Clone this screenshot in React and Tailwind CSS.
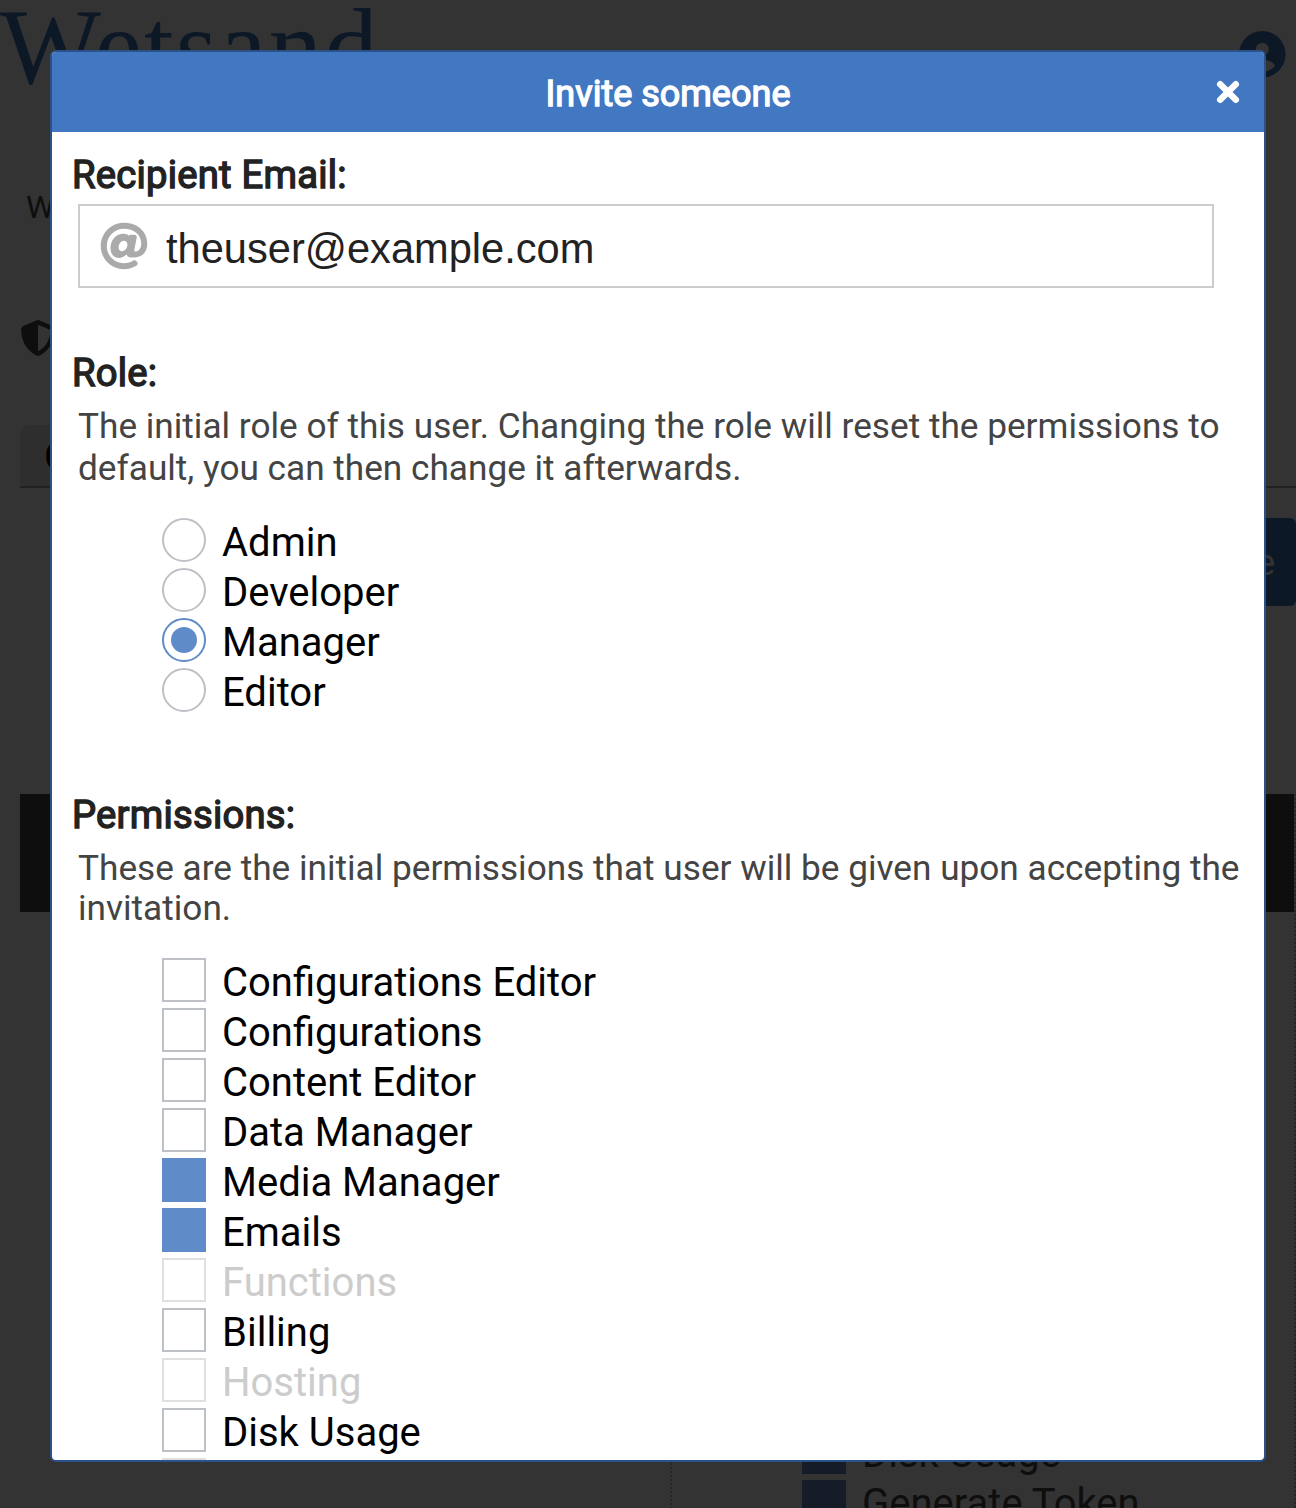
import React from "react";
import { FaAt } from "react-icons/fa";
import { FaCircleUser, FaShieldHalved } from "react-icons/fa6";

const roles = ["Admin", "Developer", "Manager", "Editor"];

const permissions = [
  { name: "Configurations Editor" },
  { name: "Configurations" },
  { name: "Content Editor" },
  { name: "Data Manager" },
  { name: "Media Manager", checked: true },
  { name: "Emails", checked: true },
  { name: "Functions", disabled: true },
  { name: "Billing" },
  { name: "Hosting", disabled: true },
  { name: "Disk Usage" },
  { name: "", disabled: true },
];

function Backdrop() {
  return (
    <div className="flex h-full flex-col bg-[#333333] text-[#0e0e0e]">
      <header className="flex h-[180px] shrink-0 items-start justify-between pr-[10.5px]">
        <div className="-mt-[2px] whitespace-nowrap font-['Liberation_Serif',serif] text-[107px] leading-[98px] tracking-[2px] text-[#0d1826]">
          Wetsand
        </div>
        <FaCircleUser className="mt-[30.5px] size-[46.5px] text-[#0d1826]" />
      </header>
      <p className="h-[140px] shrink-0 pl-[26px] pt-[9px] text-[32px] leading-[36px]">W</p>
      <div className="h-[105px] shrink-0 pl-[20px]">
        <FaShieldHalved className="size-[36px]" />
      </div>
      <div className="ml-[20px] flex h-[63px] shrink-0 border-b-2 border-[#212121]">
        <div className="w-[240px] rounded-t-[10px] bg-[#2e2e2e] pl-[24px] pt-[10px] text-[38px] leading-[44px] text-black">
          G
        </div>
      </div>
      <div className="flex h-[306px] shrink-0 justify-end pt-[30px]">
        <div className="h-[88px] w-[160px] rounded-[6px] bg-[#0d1826] pr-[21px] pt-[23px] text-right text-[36px] leading-[44px] text-[#333333]">
          e
        </div>
      </div>
      <div className="ml-[20px] flex min-h-0 grow flex-col border-r-2 border-dotted border-[#262626]">
        <div className="h-[118px] shrink-0 bg-[#0e0e0e]" />
        <div className="ml-[650px] flex grow flex-col gap-[6px] border-l-2 border-dotted border-[#262626] pl-[130px] pt-[518px]">
          {["Disk Usage", "Generate Token"].map((t) => (
            <div key={t} className="flex h-[44px] shrink-0 items-start gap-4">
              <span className="size-[44px] bg-[#151c28]" />
              <span className="pt-[1px] text-[40px] leading-[46px]">{t}</span>
            </div>
          ))}
        </div>
      </div>
    </div>
  );
}

function Heading({ children }) {
  return (
    <h2 className="text-[38.2px] leading-[46px] tracking-[0.24px] text-[#222222] [-webkit-text-stroke:1.4px_#222222]">
      {children}
    </h2>
  );
}

function Radio({ label, checked }) {
  return (
    <label className="flex h-[44px] gap-4">
      <span
        className={
          "flex size-[44px] items-center justify-center rounded-full border-2 " +
          (checked ? "border-[#5f8bc9]" : "border-[#bdc1c6]")
        }
      >
        {checked && <span className="size-[26px] rounded-full bg-[#5f8bc9]" />}
      </span>
      <span className="pt-[2px] text-[40px] leading-[46px] text-black">{label}</span>
    </label>
  );
}

function Checkbox({ name, checked, disabled }) {
  return (
    <label className="flex h-[44px] shrink-0 gap-4">
      <span
        className={
          "size-[44px] border-2 " +
          (checked ? "border-[#5f8bc9] bg-[#5f8bc9]" : disabled ? "border-[#e0e0e0]" : "border-[#bdc1c6]")
        }
      />
      <span className={"pt-[2px] text-[40px] leading-[46px] " + (disabled ? "text-[#cccccc]" : "text-black")}>
        {name}
      </span>
    </label>
  );
}

export default function App() {
  return (
    <div className="relative h-[1508px] w-[1296px] overflow-hidden font-[Roboto,sans-serif]">
      <Backdrop />
      <div className="absolute inset-0 pb-[46px] pl-[50px] pr-[30px] pt-[50px]">
        <div className="flex h-full flex-col overflow-hidden rounded-[6px] border-2 border-[#2b5189] bg-white">
          <div className="flex h-[80px] shrink-0 items-center bg-[#4277c2] pl-[72px] pr-[20px] text-white">
            <h1 className="grow pt-[4px] text-center text-[36px] leading-[44px] [-webkit-text-stroke:1.3px_#ffffff]">
              Invite someone
            </h1>
            <svg className="size-[32px]" viewBox="0 0 32 32" stroke="currentColor" strokeWidth="6.4" strokeLinecap="round">
              <path d="M8.2 8.2 23.8 23.8M23.8 8.2 8.2 23.8" />
            </svg>
          </div>
          <div className="flex min-h-0 grow flex-col overflow-hidden pl-[20px] pt-[20px]">
            <section className="h-[198px] shrink-0">
              <Heading>Recipient Email:</Heading>
              <div className="ml-[6px] mt-[6px] flex h-[84px] w-[1136px] items-center border-2 border-[#cccccc] pl-[20px]">
                <FaAt className="size-[48px] text-[#aaaaaa]" />
                <span className="pl-[18px] pt-[5px] font-['Liberation_Sans',sans-serif] text-[41.6px] leading-[46px] text-[#222222]">
                  theuser@example.com
                </span>
              </div>
            </section>
            <section className="h-[442px] shrink-0">
              <Heading>Role:</Heading>
              <p className="whitespace-nowrap pl-[6px] pt-[9px] text-[35.2px] leading-[42px] text-[#444444]">
                The initial role of this user. Changing the role will reset the permissions to
                <br />
                default, you can then change it afterwards.
              </p>
              <div className="ml-[90px] mt-[29px] flex flex-col gap-[6px]">
                {roles.map((r) => (
                  <Radio key={r} label={r} checked={r === "Manager"} />
                ))}
              </div>
            </section>
            <section>
              <Heading>Permissions:</Heading>
              <p className="whitespace-nowrap pl-[6px] pt-[10px] text-[35.2px] leading-[40px] text-[#444444]">
                These are the initial permissions that user will be given upon accepting the
                <br />
                invitation.
              </p>
              <div className="ml-[90px] mt-[30px] flex flex-col gap-[6px]">
                {permissions.map((p) => (
                  <Checkbox key={p.name} {...p} />
                ))}
              </div>
            </section>
          </div>
        </div>
      </div>
    </div>
  );
}
